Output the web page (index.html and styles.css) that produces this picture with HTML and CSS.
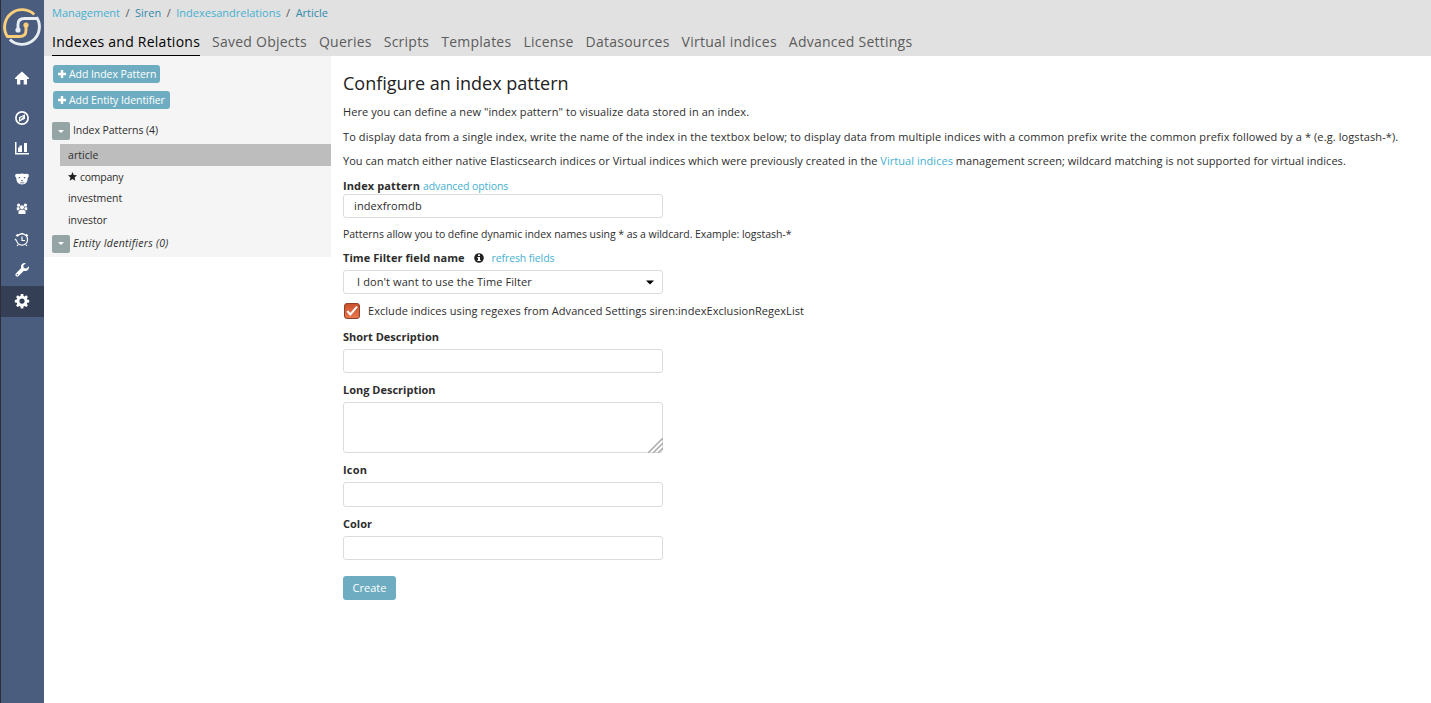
FILE: index.html
```html
<!DOCTYPE html>
<html lang="en">
<head>
<meta charset="utf-8">
<title>Management - Siren</title>
<link rel="stylesheet" href="styles.css">
</head>
<body>
<div class="app">
  <nav class="rail">
    <svg class="logo" viewBox="0 0 40 40" fill="none" stroke-width="2.900">
      <path d="M32.200 7.500A17.500 17.500 0 0 0 4.850 28.750L5.500 29.500H17.500Q24 29.500 24 23.500V18" stroke="#fbce7b"/>
      <path d="M7.800 32.500A17.500 17.500 0 0 0 35.150 11.250L34.500 11.500H22.500Q16 11.500 16 17.500V23" stroke="#e8edf1"/>
      <circle cx="24" cy="18" r="2.600" fill="#fbce7b"/>
      <circle cx="16" cy="23" r="2.600" fill="#e8edf1"/>
    </svg>
    <a class="rail-item home"><svg viewBox="0 0 16 16"><path d="M8 1.500 15 8v1h-2v5.500H9.700V10H6.300v4.500H3V9H1V8l3-3Z"/></svg></a>
    <a class="rail-item compass"><svg viewBox="0 0 16 16"><circle cx="8" cy="8" r="6.100" fill="none" stroke="#fff" stroke-width="1.700"/><path fill-rule="evenodd" d="M11 4.200v4.500L5 11.800V7.300ZM9.900 6 6.300 8v2Z"/></svg></a>
    <a class="rail-item"><svg viewBox="0 0 16 16"><path d="M1 2h1.500v11H15v1.500H1ZM4 7.500h3V12H4ZM5.500 5.500H8V12H5.500ZM10 3h3v9h-3Z"/></svg></a>
    <a class="rail-item"><svg viewBox="0 0 16 16"><path fill-rule="evenodd" d="M1.200 3.800Q2.500 2 5 3q3-1 6 0 2.500-1 3.800.8.500 2-1 3-.3 6.700-5.800 6.700T2.200 6.800q-1.500-1-1-3ZM4.700 6v1.300h1.400V6Zm5.200 0v1.300h1.400V6ZM6.500 9.200h3L8 10.500ZM5.800 11.500h4.400V12.300H5.800Z"/></svg></a>
    <a class="rail-item users"><svg viewBox="0 0 16 16"><circle cx="4.600" cy="4.200" r="1.600"/><circle cx="11.400" cy="4.200" r="1.600"/><circle cx="8" cy="6.200" r="2"/><path d="M2.800 6.300h2.400L5.800 8 4.200 9.300H2.800ZM13.200 6.300h-2.400L10.200 8l1.600 1.300h1.400ZM4.500 10 6.200 8.700h3.600l1.700 1.300V13h-7Z"/></svg></a>
    <a class="rail-item"><svg viewBox="0 0 16 16" fill="none" stroke="#fff" stroke-width="1.200"><path d="M3.300 4.500a5.600 5.600 0 1 1-.8 4M8 4.500V8.500h3M2 4 4 2.300M12 2.300 14 4M4.200 12.500 3 14M11.800 12.500 13 14M2.500 8.500 1 7M6.500 1.700h3"/></svg></a>
    <a class="rail-item"><svg viewBox="0 0 16 16"><path fill-rule="evenodd" d="M14.900 4.300c.7 3-2 5.500-5 4.500L4.600 14.100a1.900 1.900 0 0 1-2.700-2.700L7.200 6.100C6.200 3 8.800.5 11.800 1.200L9.300 3.500l.5 2.500 2.600.6ZM3.300 12a.7.700 0 1 0 0 1.400.7.700 0 0 0 0-1.400Z"/></svg></a>
    <a class="rail-item active"><svg viewBox="0 0 16 16"><path fill-rule="evenodd" d="m6.800 1 2.400 0 .4 2 1 .4 1.700-1.100 1.600 1.600-1.100 1.700.4 1 2 .4v2.400l-2 .4-.4 1 1.100 1.700-1.600 1.600-1.700-1.100-1 .4-.4 2H6.800l-.4-2-1-.4-1.700 1.100-1.600-1.600 1.100-1.700-.4-1-2-.4V7l2-.4.4-1-1.100-1.700 1.600-1.600 1.700 1.100 1-.4ZM8 5.500a2.600 2.600 0 1 0 0 5.200 2.600 2.600 0 0 0 0-5.200Z"/></svg></a>
  </nav>
  <div class="page">
    <header class="top">
      <div class="crumbs"><a>Management</a><i>/</i><a class="dark">Siren</a><i>/</i><a>Indexesandrelations</a><i>/</i><a class="dark">Article</a></div>
      <div class="tabs"><a class="current">Indexes and Relations</a><a>Saved Objects</a><a>Queries</a><a>Scripts</a><a>Templates</a><a>License</a><a>Datasources</a><a>Virtual indices</a><a>Advanced Settings</a></div>
    </header>
    <div class="body">
      <aside class="side">
        <button class="add"><svg viewBox="0 0 8 8"><path d="M2.800 0h2.400v2.800H8v2.400H5.200V8H2.800V5.200H0V2.800h2.800Z"/></svg><span>Add Index Pattern</span></button>
        <button class="add entity"><svg viewBox="0 0 8 8"><path d="M2.800 0h2.400v2.800H8v2.400H5.200V8H2.800V5.200H0V2.800h2.800Z"/></svg><span>Add Entity Identifier</span></button>
        <div class="group"><b class="toggle"></b><span>Index Patterns (4)</span></div>
        <ul class="list">
          <li class="selected">article</li>
          <li class="starred"><svg viewBox="0 0 10 10"><path d="m5 0 1.400 3.300 3.600.3-2.700 2.400.8 3.600L5 7.700 1.900 9.600l.8-3.600L0 3.600l3.600-.3Z"/></svg>company</li>
          <li>investment</li>
          <li>investor</li>
        </ul>
        <div class="group ids"><b class="toggle"></b><span>Entity Identifiers (0)</span></div>
      </aside>
      <main class="main">
        <h1>Configure an index pattern</h1>
        <p class="p1">Here you can define a new "index pattern" to visualize data stored in an index.</p>
        <p class="p2">To display data from a single index, write the name of the index in the textbox below; to display data from multiple indices with a common prefix write the common prefix followed by a * (e.g. logstash-*).</p>
        <p class="p3">You can match either native Elasticsearch indices or Virtual indices which were previously created in the <a>Virtual indices</a> management screen; wildcard matching is not supported for virtual indices.</p>
        <div class="label first"><strong>Index pattern</strong><a>advanced options</a></div>
        <div class="field"><span>indexfromdb</span></div>
        <p class="help">Patterns allow you to define dynamic index names using * as a wildcard. Example: logstash-*</p>
        <div class="label time"><strong>Time Filter field name</strong><svg viewBox="0 0 10 10"><circle cx="5" cy="5" r="4.800" fill="#222"/><path fill="#fff" d="M4 1.500h2V3H4ZM3.400 4H6v3h.7v1H3.400V7H4V5h-.6Z"/></svg><a>refresh fields</a></div>
        <div class="field select"><span>I don't want to use the Time Filter</span><svg viewBox="0 0 8 5"><path d="M0 .5h8L4 4.500Z"/></svg></div>
        <div class="check"><svg viewBox="0 0 16 16"><defs><linearGradient id="box" x2="0" y2="1"><stop stop-color="#c9502a"/><stop offset="1" stop-color="#e8794f"/></linearGradient></defs><rect x=".5" y=".5" width="15" height="15" rx="2.500" fill="url(#box)" stroke="#8e4128"/><path d="m3.300 8 3 3.500L13 3.700" fill="none" stroke="#fff" stroke-width="2"/></svg><span>Exclude indices using regexes from Advanced Settings siren:indexExclusionRegexList</span></div>
        <div class="label short"><strong>Short Description</strong></div>
        <div class="field"></div>
        <div class="label long"><strong>Long Description</strong></div>
        <div class="field area"><svg viewBox="0 0 15 15"><path d="M0 15 15 0M5 15 15 5M10 15l5-5" stroke="#aaa" stroke-width="1.500"/></svg></div>
        <div class="label icon"><strong>Icon</strong></div>
        <div class="field tall"></div>
        <div class="label color"><strong>Color</strong></div>
        <div class="field"></div>
        <button class="create">Create</button>
      </main>
    </div>
  </div>
</div>
</body>
</html>
```
FILE: styles.css
```css
* { box-sizing: border-box; }
body { margin: 0; background: #fff; font-family: "Open Sans", sans-serif; font-size: 11px; color: #2d2d2d; }
a { color: #45b0d0; }
.app { display: flex; width: 1431px; height: 703px; overflow: hidden; }
.rail { width: 44px; flex: none; background: #4a5d7e; border-left: 1px solid #2d2d3c; }
.logo { display: block; width: 40px; height: 40px; margin: 7px 0 0 1px; }
.logo circle { stroke: none; }
.rail-item { display: flex; height: 30.5px; align-items: center; justify-content: center; padding-right: 1px; }
.rail-item svg { width: 16px; height: 16px; fill: #fff; }
.rail-item svg[fill="none"] { fill: none; }
.home { margin-top: 16px; }
.compass { margin-top: 9px; }
.active { height: 31px; background: #343f55; }
.page { flex: 1; min-width: 0; }
.top { height: 56px; background: #e1e1e1; padding-left: 8px; }
.crumbs { display: flex; height: 27px; line-height: 25px; }
.crumbs i { font-style: normal; width: 15px; text-align: center; color: #555; }
.crumbs .dark { color: #328bad; }
.tabs { display: flex; gap: 12px; height: 29px; font-size: 14px; line-height: 29px; letter-spacing: .24px; white-space: nowrap; }
.tabs a { color: #5c5c5c; }
.tabs .current { color: #000; border-bottom: 1px solid #000; }
.body { display: flex; align-items: flex-start; }
.side { width: 287px; height: 201px; flex: none; background: #f5f5f5; padding: 9px 0 0 8px; font-size: 10.5px; letter-spacing: -.06px; }
button { border: 0; font-family: inherit; color: #fff; background: #6eadc1; border-radius: 3px; }
.add { display: flex; align-items: center; gap: 3px; width: 107px; height: 18px; margin: 0 0 8px 1px; padding: 0 5px; font-size: 10.5px; letter-spacing: -.06px; white-space: nowrap; }
.add svg { width: 8px; height: 8px; fill: #fff; flex: none; }
.entity { width: 117px; }
.group { display: flex; align-items: center; gap: 3px; height: 18px; margin-top: 13px; }
.group span { margin-top: -2px; }
.toggle { display: grid; place-items: center; width: 18px; height: 18px; background: #95a5a6; border-radius: 2px; }
.toggle::after { content: ""; border: 3px solid transparent; border-top-color: #fff; border-bottom: 0; }
.list { list-style: none; margin: 4px 0 0 8px; padding: 0; }
.list li { display: flex; align-items: center; gap: 3px; height: 21.5px; padding-left: 8px; }
.list .selected { height: 22px; background: #bdbdbd; letter-spacing: .05px; }
.list .starred { letter-spacing: -.25px; }
.list svg { width: 9px; height: 9px; fill: #222; }
.ids { margin-top: 4px; font-style: italic; letter-spacing: .29px; }
.main { flex: 1; min-width: 0; padding: 15px 0 0 12px; white-space: nowrap; }
h1 { margin: 0; font-size: 18px; font-weight: 400; line-height: 24px; color: #222; }
p { margin: 0; line-height: 16px; }
.p1 { margin-top: 9px; letter-spacing: .075px; }
.p2 { margin-top: 9px; letter-spacing: .106px; }
.p3 { margin-top: 8px; letter-spacing: .045px; }
.label { display: flex; align-items: center; height: 16px; line-height: 16px; }
.label a { font-size: 10.5px; letter-spacing: -.1px; }
.label.first { margin-top: 9px; gap: 3px; }
.label.first strong { letter-spacing: .12px; }
.field { display: flex; align-items: center; width: 320px; height: 24px; padding: 0 10px; border: 1px solid #dcdcdc; border-radius: 3px; background: #fff; }
.field span { padding-bottom: 2px; letter-spacing: .1px; }
.label + .field { margin-top: 4px; }
.label.first + .field { margin-top: 0; }
.help { margin-top: 8px; font-size: 10.5px; letter-spacing: -.045px; }
.time { margin-top: 8px; }
.time strong { letter-spacing: .06px; }
.time svg { width: 10px; height: 10px; margin: 0 8px 0 9px; }
.field.select { justify-content: space-between; padding: 0 8px 0 13px; }
.select svg { width: 8px; height: 5px; }
.check { display: flex; align-items: center; gap: 8px; height: 16px; margin: 9px 0 0 1px; }
.check svg { width: 16px; height: 16px; }
.check span { padding-bottom: 2px; letter-spacing: .05px; }
.short { margin-top: 10px; }
.long { margin-top: 9px; }
.field.area { height: 51px; padding: 0; align-items: flex-end; justify-content: flex-end; }
.area svg { width: 15px; height: 15px; margin: 0 -1px -1px 0; }
.icon { margin-top: 9px; letter-spacing: .2px; }
.tall { height: 25px; }
.color { margin-top: 9px; }
.create { display: block; width: 53px; height: 24px; margin-top: 16px; padding: 0 0 2px; font-size: 11px; }
```
